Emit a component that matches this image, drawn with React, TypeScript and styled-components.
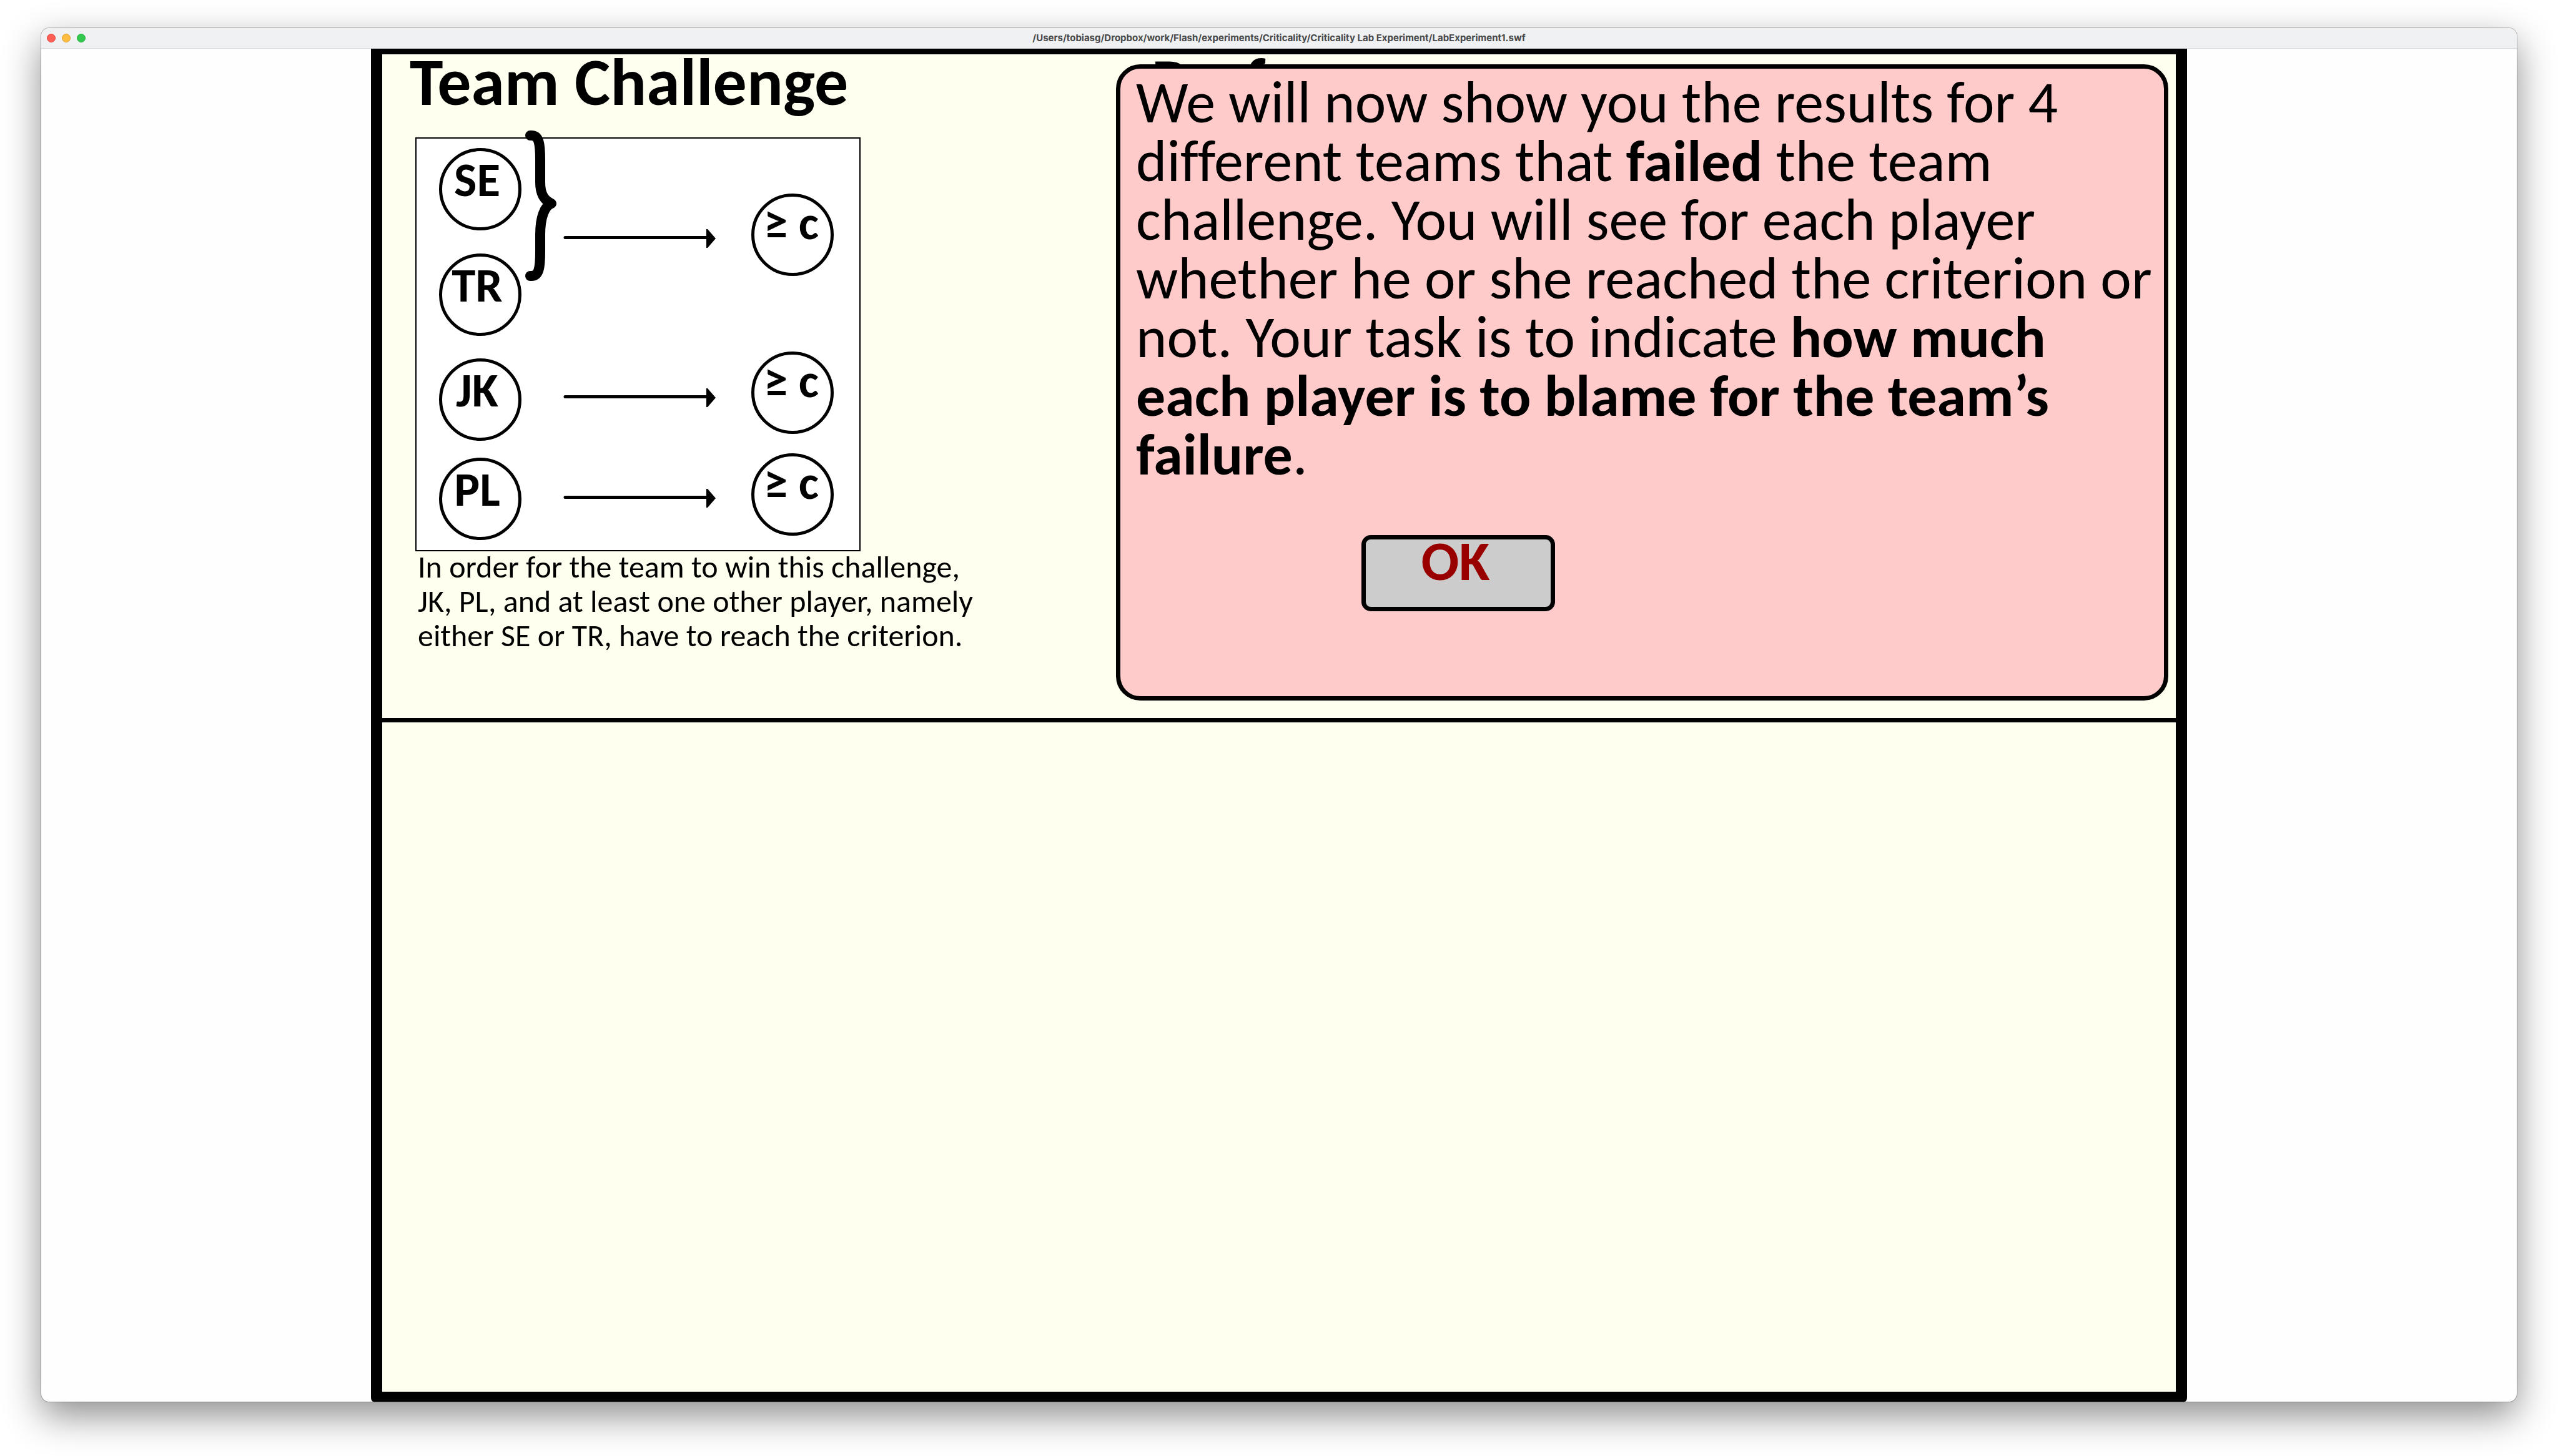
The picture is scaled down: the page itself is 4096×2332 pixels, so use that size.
import React from "react";
import styled, { createGlobalStyle } from "styled-components";

const GlobalStyle = createGlobalStyle`
  *, *::before, *::after { box-sizing: border-box; }
  body {
    margin: 0;
    background: #fff;
    color: #000;
    font-family: Calibri, Carlito, Lato, sans-serif;
    font-variant-ligatures: none;
  }
  h1, h2, p { margin: 0; }
`;

const Desktop = styled.div`
  display: flex;
  min-height: 100vh;
  padding: 45px 66px 87px;
`;

const Window = styled.main`
  flex: 1;
  display: flex;
  flex-direction: column;
  border-radius: 13px;
  overflow: hidden;
  background: #fefefe;
  box-shadow: 0 0 0 1px rgba(0, 0, 0, 0.25), 0 22px 60px rgba(0, 0, 0, 0.45);
`;

const TitleBar = styled.header`
  display: grid;
  grid-template-columns: 1fr auto 1fr;
  align-items: center;
  height: 33px;
  padding: 0 9px;
  background: #f0f1f3;
  border-bottom: 1px solid #d9dadb;
`;

const Lights = styled.div`
  display: flex;
  gap: 10px;
`;

const Light = styled.button<{ $fill: string; $rim: string }>`
  width: 14px;
  height: 14px;
  padding: 0;
  border: 1px solid ${(p) => p.$rim};
  border-radius: 50%;
  background: ${(p) => p.$fill};
`;

const Path = styled.h1`
  font: 700 15px/20px Inter, sans-serif;
  color: #48494a;
`;

const Body = styled.div`
  flex: 1;
  display: flex;
  padding: 0 528px;
`;

const Stage = styled.div`
  flex: 1;
  display: flex;
  flex-direction: column;
  border: solid #000;
  border-width: 9px 18px 16px;
  border-radius: 0 0 4px 4px / 0 0 7px 7px;
  background: #feffee;
`;

const TopPane = styled.div`
  display: grid;
  grid-template-columns: 1175px 1fr;
  min-height: 1070px;
  border-bottom: 7px solid #000;
`;

const Challenge = styled.section`
  padding-left: 53px;
`;

const Heading = styled.h2`
  margin-left: -9px;
  font-size: 108px;
  line-height: 88px;
  font-weight: 700;
`;

const Diagram = styled.div`
  position: relative;
  width: 713px;
  height: 663px;
  margin-top: 45px;
  border: 2px solid #000;
  background: #fff;
`;

const Node = styled.div<{ $x: number; $y: number }>`
  position: absolute;
  left: ${(p) => p.$x}px;
  top: ${(p) => p.$y}px;
  width: 132px;
  height: 132px;
  padding: 8px 10px 0 0;
  border: 5px solid #000;
  border-radius: 50%;
  text-align: center;
  white-space: nowrap;
  font-size: 77px;
  line-height: 76px;
  font-weight: 700;
`;

const Criterion = styled(Node)`
  padding: 4px 4px 0 0;
`;

const Brace = styled.svg`
  position: absolute;
  left: 174px;
  top: -14px;
  width: 50px;
  height: 243px;
`;

const Arrow = styled.svg<{ $y: number }>`
  position: absolute;
  left: 235px;
  top: ${(p) => p.$y}px;
  width: 244px;
  height: 32px;
`;

const Caption = styled.p`
  margin: -3px 0 0 4px;
  font-size: 50px;
  line-height: 55px;
`;

const Results = styled.section`
  position: relative;
  padding-left: 66px;
`;

const Dialog = styled.div`
  position: absolute;
  inset: 16px 12px 28px 0;
  padding: 7px 0 7px 25px;
  border: 7px solid #000;
  border-radius: 39px;
  background: #fecbca;
`;

const Message = styled.p`
  font-size: 94px;
  line-height: 94px;
`;

const OkButton = styled.button`
  display: block;
  width: 310px;
  height: 122px;
  margin: 82px 0 0 361px;
  padding: 0 9px 40px 0;
  border: 7px solid #000;
  border-radius: 15px;
  background: #ccc;
  color: #900;
  font: inherit;
  font-size: 90px;
  line-height: 68px;
  font-weight: 700;
`;

const players = [
  { name: "SE", y: 15 },
  { name: "TR", y: 184 },
  { name: "JK", y: 352 },
  { name: "PL", y: 511 },
];

const criteria = [
  { y: 88, arrow: 144 },
  { y: 341, arrow: 399 },
  { y: 504, arrow: 560 },
];

export default function App() {
  return (
    <>
      <GlobalStyle />
      <Desktop>
        <Window>
          <TitleBar>
            <Lights>
              <Light aria-label="Close" $fill="#ff5f57" $rim="#e2463f" />
              <Light aria-label="Minimise" $fill="#febc40" $rim="#dfa032" />
              <Light aria-label="Zoom" $fill="#33c950" $rim="#26ac3a" />
            </Lights>
            <Path>/Users/tobiasg/Dropbox/work/Flash/experiments/Criticality/Criticality Lab Experiment/LabExperiment1.swf</Path>
          </TitleBar>
          <Body>
            <Stage>
              <TopPane>
                <Challenge>
                  <Heading>Team Challenge</Heading>
                  <Diagram>
                    {players.map((p) => (
                      <Node key={p.name} $x={36} $y={p.y}>{p.name}</Node>
                    ))}
                    <Brace viewBox="0 0 50 243" aria-hidden="true">
                      <path
                        d="M8 9H10C22 9 24 22 24 48V84C24 104 31 113 42 118C31 122 24 140 24 168V195C24 221 22 234 10 234H8"
                        fill="none"
                        stroke="#000"
                        strokeWidth="16"
                        strokeLinecap="round"
                        strokeLinejoin="round"
                      />
                    </Brace>
                    {criteria.map((c) => (
                      <React.Fragment key={c.y}>
                        <Arrow $y={c.arrow} viewBox="0 0 244 32" aria-hidden="true">
                          <path d="M3 14.5H230" stroke="#000" strokeWidth="5" strokeLinecap="round" />
                          <path d="M229 1L231 1L244 16L231 31L229 31Z" />
                        </Arrow>
                        <Criterion $x={536} $y={c.y}>≥ c</Criterion>
                      </React.Fragment>
                    ))}
                  </Diagram>
                  <Caption>
                    In order for the team to win this challenge,
                    <br />
                    JK, PL, and at least one other player, namely
                    <br />
                    either SE or TR, have to reach the criterion.
                  </Caption>
                </Challenge>
                <Results>
                  <Heading>Performance</Heading>
                  <Dialog role="dialog" aria-label="Instructions">
                    <Message>
                      We will now show you the results for 4<br />
                      different teams that <b>failed</b> the team
                      <br />
                      challenge. You will see for each player
                      <br />
                      whether he or she reached the criterion or
                      <br />
                      not. Your task is to indicate <b>how much</b>
                      <br />
                      <b>each player is to blame for the team’s</b>
                      <br />
                      <b>failure</b>.
                    </Message>
                    <OkButton>OK</OkButton>
                  </Dialog>
                </Results>
              </TopPane>
            </Stage>
          </Body>
        </Window>
      </Desktop>
    </>
  );
}
